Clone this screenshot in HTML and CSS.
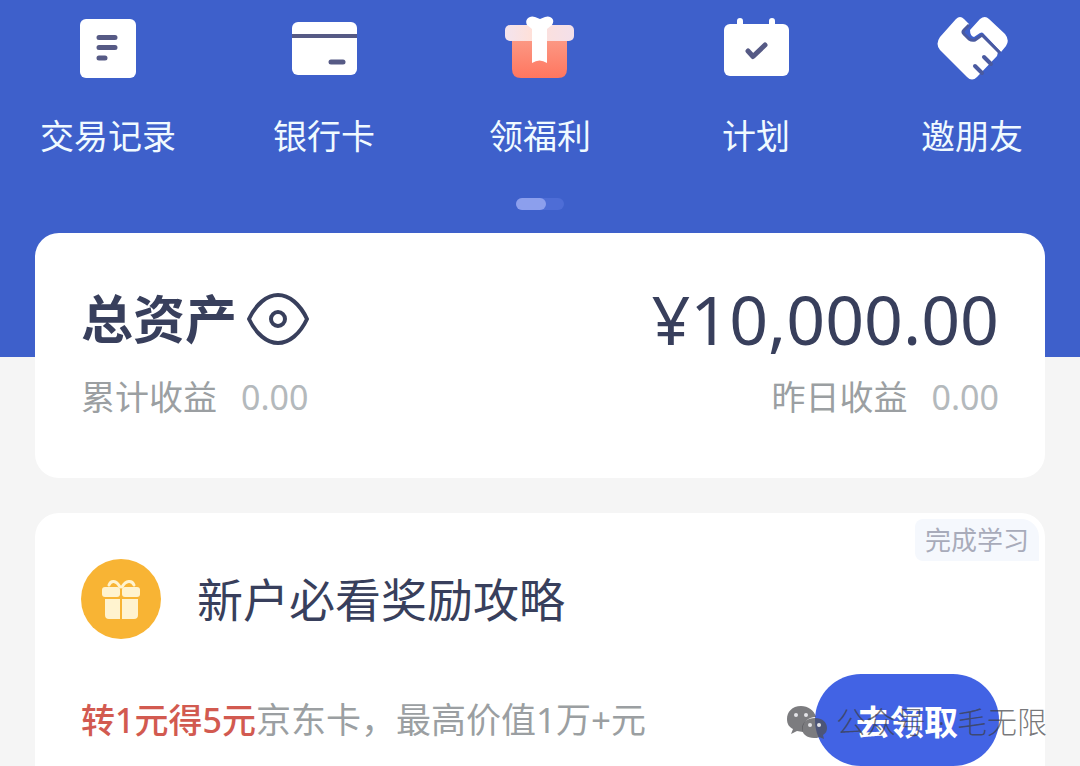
FILE: index.html
```html
<!DOCTYPE html>
<html lang="zh-CN">
<head>
<meta charset="UTF-8">
<title>总资产</title>
<meta name="viewport" content="width=device-width, initial-scale=1.0">
<link rel="stylesheet" href="styles.css">
</head>

<body>

<header class="hero">
<nav class="menu">
<a href="#records" class="menu-item">
<svg class="menu-icon" viewBox="0 0 72 72">
<rect x="8" y="7" width="56" height="59" rx="6" fill="#fff"/>
<path d="M27 25.500H43M27 35.500H43M27 46H33" stroke="#565a85" stroke-width="5" stroke-linecap="round"/>
</svg>
<span>交易记录</span>
</a>
<a href="#cards" class="menu-item">
<svg class="menu-icon" viewBox="0 0 72 72">
<rect x="4" y="10" width="65" height="53" rx="6" fill="#fff"/>
<path d="M4 24H69" stroke="#565a85" stroke-width="4"/>
<path d="M43 50H55" stroke="#565a85" stroke-width="5" stroke-linecap="round"/>
</svg>
<span>银行卡</span>
</a>
<a href="#gifts" class="menu-item">
<svg class="menu-icon" viewBox="0 0 72 72">
<defs>
<linearGradient id="box" x1="0" y1="0" x2="0" y2="1"><stop offset="0" stop-color="#fb9c88"/><stop offset="1" stop-color="#ff765f"/></linearGradient>
<linearGradient id="lid" x1="0" y1="0" x2="1" y2="0"><stop offset="0" stop-color="#f3e4ee"/><stop offset=".4" stop-color="#ffe0d8"/><stop offset="1" stop-color="#f3e0ea"/></linearGradient>
</defs>
<path d="M8 24H63V57Q63 66 54 66H17Q8 66 8 57Z" fill="url(#box)"/>
<rect x="1" y="13" width="69" height="16" rx="5" fill="url(#lid)"/>
<path d="M28 17L23 13C20 7 26 3 31 5L36 7L41 5C46 3 52 7 48 13L43 17V51Q35.500 46 28 51Z" fill="#fff"/>
</svg>
<span>领福利</span>
</a>
<a href="#plan" class="menu-item">
<svg class="menu-icon" viewBox="0 0 72 72">
<path d="M20 9V16M52 9V16" stroke="#fff" stroke-width="6" stroke-linecap="round"/>
<rect x="4" y="12" width="65" height="52" rx="6" fill="#fff"/>
<path d="M28 39L33 44.500L45 33" fill="none" stroke="#565a85" stroke-width="5" stroke-linecap="round" stroke-linejoin="round"/>
</svg>
<span>计划</span>
</a>
<a href="#invite" class="menu-item">
<svg class="menu-icon" viewBox="0 0 72 72">
<!-- left hand with fingers -->
<path d="M20 7Q24 3 28 7L33 12L28 18Q26 20 28 22L33 27Q36 29 39 28L46 24L62 40L61 44L41 65Q36 70 31 65L4 38Q-1 32 4 25Z" fill="#fff"/>
<!-- right hand -->
<path d="M44 7Q49 3 53 7L69 22Q74 28 70 34L65 40L47 21Q46 20 44 21L38 25Q34 24 34 18Z" fill="#fff"/>
<path d="M33 13L28 18Q26 20 28 22L33 27Q36 29 39 28L46 23L64 41" fill="none" stroke="#4a5aa0" stroke-width="3" stroke-linejoin="round"/>
<path d="M48 45L55 52M39 54L46 61" fill="none" stroke="#4a5aa0" stroke-width="4" stroke-linecap="round"/>
</svg>
<span>邀朋友</span>
</a>
</nav>
<div class="pager"><span class="pager-on"></span></div>
</header>

<main class="content">
<section class="card assets">
<div class="row">
<h1 class="assets-title">总资产
<button type="button" class="eye" aria-label="显示或隐藏金额">
<svg viewBox="0 0 62 54" width="62" height="54">
<path d="M2 27C9 12 20 3 31 3S53 12 60 27C53 42 42 51 31 51S9 42 2 27Z" fill="none" stroke="#383f5c" stroke-width="4" stroke-linejoin="round"/>
<circle cx="31" cy="27" r="7" fill="none" stroke="#383f5c" stroke-width="4"/>
</svg>
</button>
</h1>
<div class="amount">¥10,000.00</div>
</div>
<div class="row sub">
<div>累计收益<span class="num">0.00</span></div>
<div>昨日收益<span class="num">0.00</span></div>
</div>
</section>

<section class="card reward">
<span class="tag">完成学习</span>
<div class="reward-head">
<svg class="reward-icon" viewBox="0 0 80 80">
<circle cx="40" cy="40" r="40" fill="#f8b434"/>
<g fill="#fff3cf">
<rect x="21" y="28" width="18" height="10" rx="3"/>
<rect x="41" y="28" width="18" height="10" rx="3"/>
<path d="M24 40H39V60H28Q24 60 24 56ZM41 40H57V56Q57 60 53 60H41Z"/>
</g>
<path d="M39 28C35 21 30 21 28 26M41 28C45 21 51 21 53 26" fill="none" stroke="#fff3cf" stroke-width="3" stroke-linecap="round"/>
</svg>
<h2 class="reward-title">新户必看奖励攻略</h2>
</div>
<div class="row reward-foot">
<p class="reward-text"><b>转1元得5元</b>京东卡，最高价值1万+元</p>
<button type="button" class="btn">去领取</button>
</div>
</section>
</main>

<div class="watermark">
<svg viewBox="0 0 42 34" width="42" height="34">
<path d="M15 1C6 1 1 7 1 14C1 19 3 22 7 24L5 29L11 26L17 27C15 18 22 12 30 12C28 5 22 1 15 1Z"/>
<path d="M29 13C21 13 16 18 16 23.500C16 29 21 33 28 33C30 33 32 33 33 32L38 34L37 30C40 28 41 26 41 23C41 17 36 13 29 13Z"/>
<g class="dots"><circle cx="10" cy="10" r="2"/><circle cx="20" cy="10" r="2"/><circle cx="24" cy="20" r="2"/><circle cx="33" cy="20" r="2"/></g>
</svg>
<span>公众号 <i>·</i> 毛无限</span>
</div>

</body>
</html>
```
FILE: styles.css
```css
* { box-sizing: border-box; }
body {
    margin: 0;
    min-height: 100vh;
    display: flex;
    flex-direction: column;
    position: relative;
    font-family: "Noto Sans", "Noto Sans CJK SC", sans-serif;
    background-color: #f5f5f5;
    color: #383f5c;
}
h1, h2, p { margin: 0; }
button { font-family: inherit; border: none; cursor: pointer; }

.hero {
    background-color: #3e60cb;
    padding: 12px 0 147px;
}
.menu { display: grid; grid-template-columns: repeat(5, 1fr); }
.menu-item {
    display: flex;
    flex-direction: column;
    align-items: center;
    gap: 28px;
    color: #f0faff;
    font-size: 34px;
    line-height: 48px;
    text-decoration: none;
}
.menu-icon { width: 72px; height: 72px; }
.pager {
    width: 48px;
    height: 12px;
    margin: 38px auto 0;
    border-radius: 6px;
    background-color: #4e6dd6;
}
.pager-on {
    display: block;
    width: 30px;
    height: 12px;
    border-radius: 6px;
    background-color: #8c9fed;
}

.content {
    flex: 1;
    display: flex;
    flex-direction: column;
    gap: 35px;
    margin-top: -124px;
    padding: 0 35px;
}
.card {
    position: relative;
    background-color: #fff;
    border-radius: 24px;
    padding: 46px;
}
.row { display: flex; justify-content: space-between; align-items: center; }

.assets { padding-bottom: 57px; }
.assets-title {
    display: flex;
    align-items: center;
    gap: 10px;
    font-size: 52px;
    line-height: 80px;
}
.eye { display: flex; padding: 0; background: none; }
.amount { font-size: 68px; line-height: 80px; }
.sub {
    margin-top: 14px;
    color: #9b9fa2;
    font-size: 34px;
    line-height: 48px;
}
.num { margin-left: 24px; color: #b4b9bc; }

.reward { flex: 1; padding-bottom: 0; border-radius: 24px 24px 0 0; }
.tag {
    position: absolute;
    top: 6px;
    right: 6px;
    padding: 0 10px;
    border-radius: 8px 18px 0 8px;
    background-color: #f5f8fd;
    color: #a8abba;
    font-size: 26px;
    line-height: 42px;
}
.reward-head { display: flex; align-items: center; gap: 36px; }
.reward-icon { width: 80px; height: 80px; }
.reward-title { font-size: 46px; font-weight: 400; line-height: 80px; }
.reward-foot { margin-top: 35px; }
.reward-text { color: #9b9fa2; font-size: 35px; line-height: 48px; }
.reward-text b { color: #d25a50; font-size: 34px; font-weight: 500; }
.btn {
    width: 184px;
    height: 92px;
    border-radius: 46px;
    background-color: #4263e4;
    color: #fff;
    font-size: 34px;
    font-weight: 700;
}

.watermark {
    position: absolute;
    right: 33px;
    bottom: 22px;
    display: flex;
    align-items: center;
    gap: 8px;
    color: rgba(60, 60, 64, 0.7);
    font-size: 30px;
    font-weight: 300;
    line-height: 44px;
    pointer-events: none;
}
.watermark i { margin: 0 4px; font-style: normal; }
.watermark svg { fill: rgba(80, 80, 84, 0.75); }
.watermark .dots { fill: #e4e4e8; }
```
